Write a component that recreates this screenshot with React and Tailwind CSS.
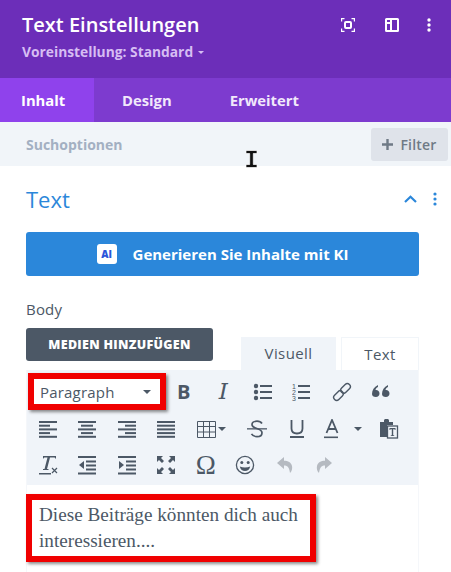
import React from 'react';

const Icon = ({ w = 20, h = 20, box, className = 'text-[#4c5866]', children }) => (
  <svg width={w} height={h} viewBox={box || `0 0 ${w} ${h}`} fill="currentColor" className={className}>
    {children}
  </svg>
);

const Bar = ({ y, x = 1, w = 18, h = 2 }) => <rect x={x} y={y} width={w} height={h} />;

const AlignIcon = ({ rows }) => (
  <Icon>
    {rows.map(([x, w], i) => (
      <Bar key={i} y={2 + i * 3.7} x={x} w={w} />
    ))}
  </Icon>
);

const Cell = ({ children, className = 'w-[39.5px]' }) => (
  <div className={`flex h-[36px] shrink-0 items-center justify-center ${className}`}>{children}</div>
);

const ListIcon = () => (
  <Icon>
    <circle cx="3" cy="4" r="2.2" />
    <circle cx="3" cy="10" r="2.2" />
    <circle cx="3" cy="16" r="2.2" />
    <Bar y={3} x={7} w={12} />
    <Bar y={9} x={7} w={12} />
    <Bar y={15} x={7} w={12} />
  </Icon>
);

const NumListIcon = () => (
  <Icon>
    <text x="0" y="7" fontSize="7" fontFamily="'Liberation Sans', sans-serif">1</text>
    <text x="0" y="13" fontSize="7" fontFamily="'Liberation Sans', sans-serif">2</text>
    <text x="0" y="19" fontSize="7" fontFamily="'Liberation Sans', sans-serif">3</text>
    <Bar y={3} x={6} w={12} />
    <Bar y={9} x={6} w={12} />
    <Bar y={15} x={6} w={12} />
  </Icon>
);

const LinkIcon = () => (
  <Icon>
    <g fill="none" stroke="currentColor" strokeWidth="1.4" transform="rotate(-45 10 10)">
      <rect x="-0.5" y="7" width="11" height="6" rx="3" />
      <rect x="9.5" y="7" width="11" height="6" rx="3" />
    </g>
  </Icon>
);

const QuoteIcon = () => (
  <Icon>
    <path d="M1 12c0-4 2-7 6-9v2c-1.500.8-2.300 1.700-2.500 3 2-.4 4 1 4 3.500 0 2-1.500 3.500-3.600 3.500C2.500 15 1 14 1 12z" />
    <path d="M11 12c0-4 2-7 6-9v2c-1.500.8-2.300 1.700-2.500 3 2-.4 4 1 4 3.500 0 2-1.500 3.500-3.600 3.500-2.400 0-3.900-1-3.900-3z" />
  </Icon>
);

const TableIcon = () => (
  <Icon w={19} h={17}>
    <path
      d="M.5.5h18v16H.5zM.5 5.500h18M.5 11h18M6.500.5v16M12.500.5v16"
      fill="none"
      stroke="currentColor"
      strokeWidth="1"
    />
  </Icon>
);

const Caret = ({ className = 'border-t-[#4c5866]' }) => (
  <span className={`inline-block h-0 w-0 border-x-[4px] border-t-[4px] border-x-transparent ${className}`} />
);

const StrikeIcon = () => (
  <Icon>
    <path
      d="M15 4.500C14 3 12.300 2.200 10 2.200c-3 0-5 1.300-5 3.500 0 4.500 10 3 10 8 0 2.500-2.200 4-5 4-2.600 0-4.500-1-5.500-2.800"
      fill="none"
      stroke="currentColor"
      strokeWidth="1.7"
    />
    <Bar y={9.200} x={0} w={20} h={1.300} />
  </Icon>
);

const UnderlineIcon = () => (
  <Icon>
    <path d="M4.500 1v8.500c0 3.200 2.200 5 5.500 5s5.500-1.800 5.500-5V1" fill="none" stroke="currentColor" strokeWidth="1.800" />
    <Bar y={17} x={3} w={14} />
  </Icon>
);

const ColorIcon = () => (
  <Icon w={16} h={20}>
    <path d="M2.500 14 8 1l5.500 13M4.500 10h7" fill="none" stroke="currentColor" strokeWidth="1.800" />
    <Bar y={17.500} x={0} w={14} h={1.600} />
  </Icon>
);

const PasteIcon = () => (
  <Icon>
    <path d="M1 3h4V1.500C5 .7 5.700 0 6.500 0h2C9.300 0 10 .7 10 1.500V3h4v3H8v12H1z" />
    <rect x="8.500" y="7" width="10" height="12" fill="#f0f4f9" stroke="currentColor" strokeWidth="1.300" />
    <path d="M10.500 9h6v2h-.8v-.8h-1.500v6h1v.8h-3.400v-.8h1v-6h-1.500v.8h-.8z" />
  </Icon>
);

const ClearIcon = () => (
  <Icon>
    <path d="M5 1h13v2.500h-.8l-.5-1H12l-3 11.500h1.500v1H5v-1h1.500L9.500 2.500H6.300l-.8 1H5z" />
    <Bar y={18} x={1} w={12} h={1.500} />
    <path d="m14 13 5 5m0-5-5 5" fill="none" stroke="currentColor" strokeWidth="1.200" />
  </Icon>
);

const IndentIcon = ({ flip }) => (
  <Icon>
    <Bar y={1} x={1} w={18} />
    <Bar y={5.500} x={9} w={10} />
    <Bar y={9.500} x={9} w={10} />
    <Bar y={13.500} x={9} w={10} />
    <Bar y={17.500} x={1} w={18} />
    <path d={flip ? 'M7 6v8l-5-4z' : 'M2 6v8l5-4z'} />
  </Icon>
);

const FullscreenIcon = () => (
  <Icon>
    <path d="M1 1h6L5 3l3 3-2 2-3-3-2 2zM19 1h-6l2 2-3 3 2 2 3-3 2 2zM1 19h6l-2-2 3-3-2-2-3 3-2-2zM19 19h-6l2-2-3-3 2-2 3 3 2-2z" />
  </Icon>
);

const SmileIcon = () => (
  <Icon>
    <circle cx="10" cy="10" r="8.600" fill="none" stroke="currentColor" strokeWidth="1.300" />
    <circle cx="6.800" cy="7.500" r="1.500" />
    <circle cx="13.200" cy="7.500" r="1.500" />
    <path d="M4.800 11.500c3 1.300 7.400 1.300 10.400 0-.6 3-2.700 4.500-5.200 4.500s-4.600-1.500-5.200-4.500z" />
  </Icon>
);

const UndoIcon = ({ flip }) => (
  <Icon className="text-[#b5bac1]">
    <path
      transform={flip ? 'matrix(-1 0 0 1 20 0)' : undefined}
      d="M9 2 2 8l7 6v-3.500c3 0 5 1 6 7.500 2-2 2.500-4.500 2-7C16.300 7.500 13 5.800 9 5.800z"
    />
  </Icon>
);

const App = () => {
  return (
    <div className="relative h-[572px] w-[451px] overflow-hidden bg-white font-['Open_Sans',sans-serif]">
      {/* Kopfzeile */}
      <div className="flex h-[78px] items-start justify-between bg-[#6c2eb9] pl-[22px] pr-[20px] pt-[11px]">
        <div>
          <div className="text-[20px] font-semibold leading-[28px] text-white">Text Einstellungen</div>
          <div className="mt-[4px] flex items-center gap-[5px] text-[13.8px] font-bold leading-[18px] text-[#d6bdf3]">
            Voreinstellung: Standard
            <span className="inline-block h-0 w-0 border-x-[3px] border-t-[3px] border-x-transparent border-t-[#d6bdf3]" />
          </div>
        </div>
        <div className="mt-[7px] flex items-center text-white">
          <svg width="14" height="14" viewBox="0 0 14 14" fill="none" stroke="currentColor" strokeWidth="1.200">
            <path d="M3.500.6H.6v2.900M10.500.6h2.900v2.900M3.500 13.400H.6v-2.900M10.500 13.400h2.900v-2.900" />
            <rect x="4" y="4" width="6" height="6" rx="1" strokeWidth="2" />
          </svg>
          <svg className="ml-[30px]" width="14" height="14" viewBox="0 0 14 14" fill="currentColor">
            <path d="M1.500 0h11A1.500 1.500 0 0 1 14 1.500v11a1.500 1.500 0 0 1-1.500 1.500h-11A1.500 1.500 0 0 1 0 12.500v-11A1.500 1.500 0 0 1 1.500 0zM2 2v2h3V2zm0 4v6h3V6zm5-4v10h5V2z" />
          </svg>
          <svg className="ml-[28px]" width="4" height="14" viewBox="0 0 4 14" fill="currentColor">
            <circle cx="2" cy="2" r="1.700" />
            <circle cx="2" cy="7" r="1.700" />
            <circle cx="2" cy="12" r="1.700" />
          </svg>
        </div>
      </div>

      {/* Tabs */}
      <div className="flex h-[44px] bg-[#7d3bcf] text-[14.8px] font-bold text-[#f1e8fb]">
        <div className="flex w-[94px] items-center pl-[21px] text-white bg-[#8f42ec]">Inhalt</div>
        <div className="flex items-center pl-[28px]">Design</div>
        <div className="flex items-center pl-[58px]">Erweitert</div>
      </div>

      {/* Suche */}
      <div className="flex h-[44px] items-center justify-between bg-[#f1f5f9] pl-[26px] pr-[3px]">
        <span className="text-[14px] font-bold text-[#a3b0c2]">Suchoptionen</span>
        <div className="flex h-[33px] w-[77px] items-center justify-center gap-[7px] rounded-[3px] bg-[#dfe3ea] text-[14px] font-semibold tracking-[0.2px] text-[#6f7a86]">
          <svg width="11" height="11" viewBox="0 0 11 11" fill="currentColor">
            <path d="M4.300 0h2.400v4.300H11v2.400H6.700V11H4.300V6.700H0V4.300h4.300z" />
          </svg>
          Filter
        </div>
      </div>

      {/* Text-Bereich */}
      <div className="px-[26px] pt-[18px]">
        <div className="flex items-center justify-between">
          <span className="text-[22px] leading-[30px] text-[#2b87da]">Text</span>
          <div className="-mr-[12px] flex items-center gap-[16px] text-[#2b87da]">
            <svg width="13" height="8" viewBox="0 0 13 8" fill="none" stroke="currentColor" strokeWidth="2.200">
              <path d="m1 7 5.500-5.300L12 7" />
            </svg>
            <svg width="4" height="14" viewBox="0 0 4 14" fill="currentColor">
              <circle cx="2" cy="2" r="1.600" />
              <circle cx="2" cy="7" r="1.600" />
              <circle cx="2" cy="12" r="1.600" />
            </svg>
          </div>
        </div>

        <button className="mt-[18px] flex h-[44px] w-[393px] items-center justify-center gap-[16px] rounded-[3px] bg-[#2b87da] text-[15px] font-bold text-white">
          <span className="flex h-[20px] w-[20px] items-center justify-center rounded-[3px] bg-white text-[10px] font-extrabold text-[#2b55da]">
            AI
          </span>
          Generieren Sie Inhalte mit KI
        </button>

        <div className="mt-[22px] text-[15px] leading-[22px] tracking-[0.2px] text-[#4c5866]">Body</div>

        <div className="mt-[8px] flex items-start">
          <div className="flex h-[33px] w-[187px] items-center justify-center rounded-[3px] bg-[#4c5866] pt-[1px] text-[12.5px] font-extrabold tracking-[0.3px] text-white">
            MEDIEN HINZUFÜGEN
          </div>
          <div className="ml-[28px] mt-[9px] flex h-[33px] w-[95px] items-center justify-center bg-[#f0f4f9] text-[15px] tracking-[0.4px] font-medium text-[#4c5866]">
            Visuell
          </div>
          <div className="ml-[5px] mt-[9px] flex h-[33px] w-[78px] items-center justify-center border border-b-0 border-[#f1f5f9] text-[15px] tracking-[0.4px] font-medium text-[#4c5866]">
            Text
          </div>
        </div>

        {/* Editor */}
        <div className="w-[393px] border-x border-b border-[#f5f7fa]">
          <div className="h-[115px] bg-[#f0f4f9] pl-[1px] pt-[3px]">
            <div className="flex h-[37px] items-center">
              <div className="flex h-[37px] w-[138px] shrink-0 items-center justify-between border-[6px] border-[#f00000] bg-white pl-[6px] pr-[9px] pt-[1px] text-[15px] tracking-[0.2px] text-[#4c5866] shadow-[2px_2px_3px_rgba(0,0,0,0.45)]">
                Paragraph
                <Caret />
              </div>
              <div className="ml-[-2px] flex">
                <Cell className="w-[39.5px]">
                  <span className="text-[20px] font-bold leading-none text-[#4c5866]">B</span>
                </Cell>
                <Cell>
                  <span className="text-[23px] italic font-medium leading-none text-[#4c5866] font-['DejaVu_Serif',serif]">I</span>
                </Cell>
                <Cell><ListIcon /></Cell>
                <Cell><NumListIcon /></Cell>
                <Cell><LinkIcon /></Cell>
                <Cell><QuoteIcon /></Cell>
              </div>
            </div>
            <div className="mt-[1px] flex">
              <Cell><AlignIcon rows={[[1, 18], [1, 11], [1, 18], [1, 11], [1, 18]]} /></Cell>
              <Cell><AlignIcon rows={[[1, 18], [4, 12], [1, 18], [4, 12], [1, 18]]} /></Cell>
              <Cell><AlignIcon rows={[[1, 18], [8, 11], [1, 18], [8, 11], [1, 18]]} /></Cell>
              <Cell><AlignIcon rows={[[1, 18], [1, 18], [1, 18], [1, 18], [1, 18]]} /></Cell>
              <Cell className="w-[50px] gap-[2px]"><TableIcon /><Caret /></Cell>
              <Cell className="w-[41px]"><StrikeIcon /></Cell>
              <Cell className="w-[39px]"><UnderlineIcon /></Cell>
              <Cell className="w-[54px] gap-[14px]"><ColorIcon /><Caret /></Cell>
              <Cell className="w-[38px]"><PasteIcon /></Cell>
            </div>
            <div className="flex">
              <Cell><ClearIcon /></Cell>
              <Cell><IndentIcon flip /></Cell>
              <Cell><IndentIcon /></Cell>
              <Cell><FullscreenIcon /></Cell>
              <Cell><span className="text-[27px] leading-none text-[#4c5866] font-['Liberation_Serif',serif]">Ω</span></Cell>
              <Cell><SmileIcon /></Cell>
              <Cell><UndoIcon /></Cell>
              <Cell><UndoIcon flip /></Cell>
            </div>
          </div>

          <div className="h-[87px] pt-[9px]">
            <div className="-ml-px w-[290px] border-[6px] border-[#f00000] bg-white py-[2px] pl-[7px] text-[19.2px] leading-[26px] text-[#4c5866] shadow-[2px_2px_3px_rgba(0,0,0,0.45)] font-['Liberation_Serif',serif]">
              Diese Beiträge könnten dich auch interessieren....
            </div>
          </div>
        </div>
      </div>

      {/* Mauszeiger */}
      <svg className="absolute left-[245px] top-[150px]" width="13" height="18" viewBox="0 0 13 18">
        <path d="M1 .5h11v3H8.300v11H12v3H1v-3h3.700v-11H1z" fill="#111" stroke="#fff" strokeWidth="0.700" />
      </svg>
    </div>
  );
};

export default App;
